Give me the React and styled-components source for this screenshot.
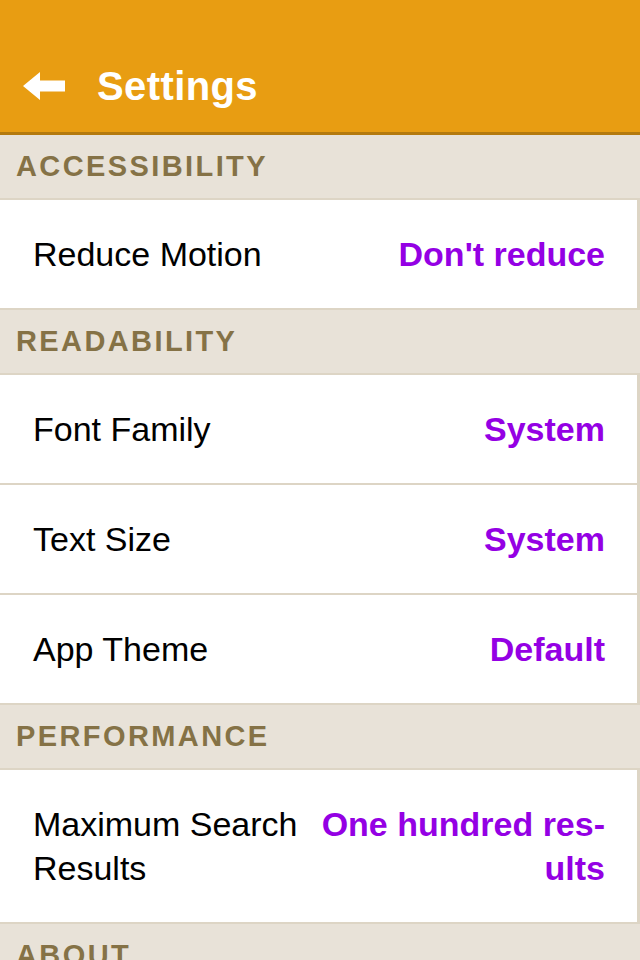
import React from "react";
import styled, { createGlobalStyle } from "styled-components";

const Global = createGlobalStyle`
  html, body { margin: 0; padding: 0; background: #e8e2d8; }
  body { font-family: "Liberation Sans", Arial, sans-serif; }
  * { box-sizing: border-box; }
`;

const Page = styled.div`
  width: 640px;
  height: 960px;
  overflow: hidden;
  background: #e8e2d8;
`;

const Header = styled.header`
  height: 135px;
  padding-top: 40px;
  background: #e89d12;
  border-bottom: 3px solid #b47a0e;
  display: flex;
  align-items: center;
`;

const BackButton = styled.button`
  width: 66px;
  height: 92px;
  padding: 0 0 0 23px;
  border: 0;
  background: transparent;
  display: flex;
  align-items: center;
`;

const Title = styled.h1`
  margin: 0 0 0 31px;
  font-size: 40px;
  font-weight: 700;
  color: #ffffff;
  letter-spacing: 0.4px;
`;

const SectionHeader = styled.div`
  height: 63px;
  padding-left: 16px;
  display: flex;
  align-items: center;
  font-size: 29px;
  font-weight: 700;
  letter-spacing: 2.4px;
  color: #857246;
  text-transform: uppercase;
`;

const Group = styled.div`
  border-top: 2px solid #ddd5c5;
`;

const Row = styled.div`
  display: flex;
  align-items: center;
  gap: 20px;
  padding: 32px 32px 32px 33px;
  background: #ffffff;
  border-bottom: 2px solid #ddd5c5;
  border-right: 3px solid #ddd5c5;
  font-size: 34px;
  line-height: 44px;
`;

const Label = styled.div`
  flex: 1 1 0;
  color: #000000;
  min-width: 0;
`;

const Value = styled.div`
  flex: 0 0 auto;
  text-align: right;
  font-weight: 700;
  color: #9400e4;
`;

const BackArrow = () => (
  <svg width="43" height="28" viewBox="0 0 43 28">
    <path d="M0 14 L17 0 L17 8.5 L42 8.5 L42 19.5 L17 19.5 L17 28 Z" fill="#ffffff" />
  </svg>
);

const sections = [
  {
    title: "Accessibility",
    rows: [{ label: "Reduce Motion", value: "Don't reduce" }],
  },
  {
    title: "Readability",
    rows: [
      { label: "Font Family", value: "System" },
      { label: "Text Size", value: "System" },
      { label: "App Theme", value: "Default" },
    ],
  },
  {
    title: "Performance",
    rows: [
      {
        label: "Maximum Search Results",
        value: (
          <>
            One hundred res-
            <br />
            ults
          </>
        ),
      },
    ],
  },
  { title: "About", rows: [] },
];

export default function App() {
  return (
    <Page>
      <Global />
      <Header>
        <BackButton aria-label="Back">
          <BackArrow />
        </BackButton>
        <Title>Settings</Title>
      </Header>
      {sections.map((s) => (
        <React.Fragment key={s.title}>
          <SectionHeader>{s.title}</SectionHeader>
          {s.rows.length > 0 && (
            <Group>
              {s.rows.map((r) => (
                <Row key={r.label}>
                  <Label>{r.label}</Label>
                  <Value>{r.value}</Value>
                </Row>
              ))}
            </Group>
          )}
        </React.Fragment>
      ))}
    </Page>
  );
}
